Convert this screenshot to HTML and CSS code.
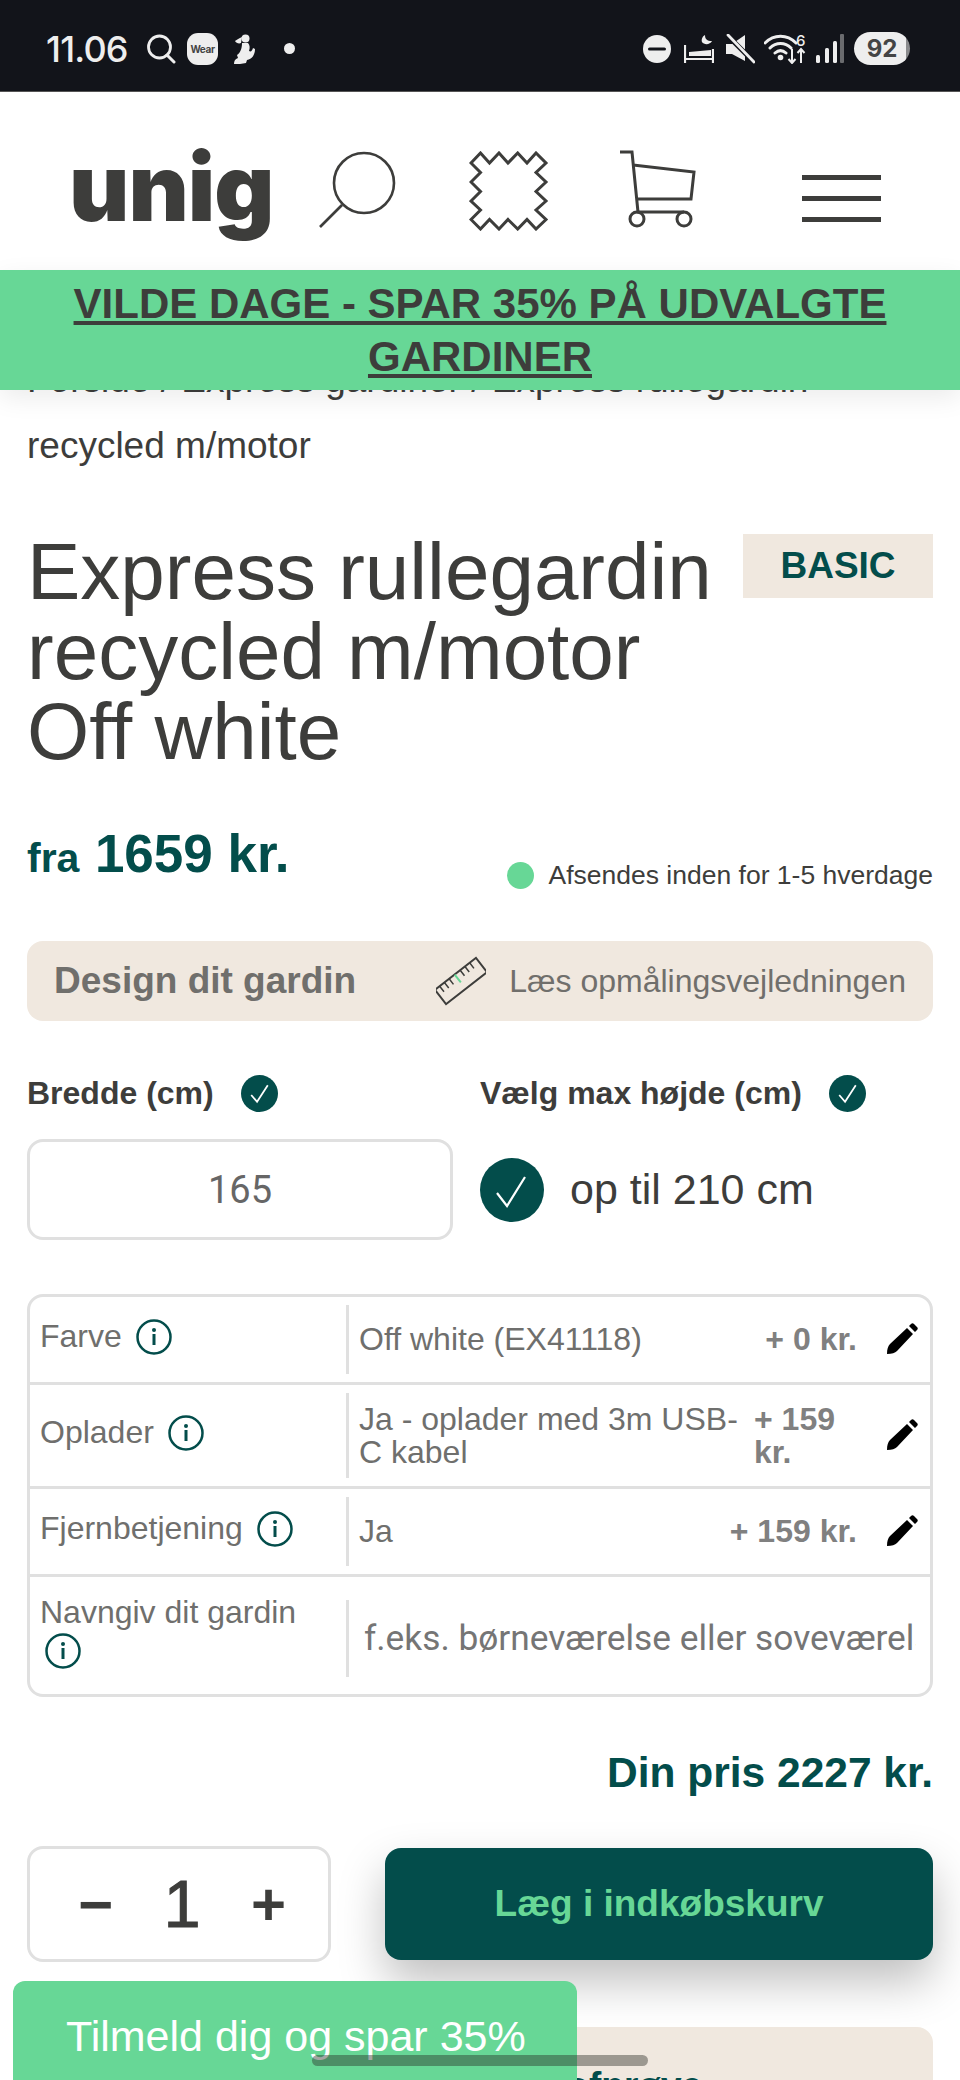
FILE: index.html
```html
<!DOCTYPE html>
<html lang="da">
<head>
<meta charset="utf-8">
<title>Express rullegardin recycled m/motor</title>
<link rel="stylesheet" href="styles.css">
</head>
<body>
<div class="page">
  <div class="status">
    <div class="status-left">
      <span class="clock">11.06</span>
      <svg class="st-search" viewBox="0 0 30 30"><circle cx="13.500" cy="13" r="11" fill="none" stroke="#eee" stroke-width="2.800"/><path d="M21 21l7 7" stroke="#eee" stroke-width="3" stroke-linecap="round"/></svg>
      <span class="wear">Wear</span>
      <svg class="st-fig" viewBox="0 0 24 30"><circle cx="13.500" cy="4.500" r="4" fill="#eee"/><path d="M10 3C7 4 5 6 3 7c1 2 4 3 6 2z" fill="#eee"/><path d="M10 9h6c2 2 2 5 1 8 2 1 3 0 4-3l2 1c0 6-3 10-8 11l-1 3c-4 1-8 1-12 1 0-3 1-5 4-6l-1-3c3-2 5-6 5-12z" fill="#eee"/></svg>
      <span class="st-dot"></span>
    </div>
    <div class="status-right">
      <svg class="st-dnd" viewBox="0 0 28 28"><circle cx="14" cy="14" r="14" fill="#eee"/><rect x="5" y="12.400" width="18" height="3.200" rx="1.600" fill="#12141a"/></svg>
      <svg class="st-bed" viewBox="0 0 30 28"><path d="M1 10v18M1 24h28v4M29 14v10" stroke="#eee" stroke-width="2.200" fill="none"/><path d="M5 21h22v-6L5 17z" fill="#eee"/><path d="M21 0c0 4 2 6 7 6-2 4-8 4-10 1-1-3 1-6 3-7z" fill="#eee"/></svg>
      <svg class="st-mute" viewBox="0 0 30 30"><path d="M1 10h6l13-9v26L7 20H1z" fill="#eee"/><path d="M3 2l26 26" stroke="#12141a" stroke-width="5"/><path d="M3 1l26 27" stroke="#eee" stroke-width="2.800" stroke-linecap="round"/></svg>
      <svg class="st-wifi" viewBox="0 0 42 30"><path d="M1 9c9-9 22-9 31 0M6 14c6-6 15-6 21 0M11 19c3.400-3 7.600-3 11 0" fill="none" stroke="#eee" stroke-width="3" stroke-linecap="round"/><circle cx="16.500" cy="23.500" r="2.800" fill="#eee"/><path d="M28 15v14m-3.500-4l3.500 4 3.500-4M37 29V15m-3.500 4l3.500-4 3.500 4" fill="none" stroke="#eee" stroke-width="2"/><text x="32" y="12" class="st-six">6</text></svg>
      <svg class="st-signal" viewBox="0 0 28 30"><g fill="#eee"><rect x="0" y="21" width="4" height="8" rx="1.500"/><rect x="9" y="14" width="4" height="15" rx="1.500"/><rect x="17" y="7" width="4" height="22" rx="1.500"/></g><rect x="24" y="0" width="4" height="29" rx="1" fill="#6a6b6e"/></svg>
      <span class="battery">92</span>
    </div>
  </div>

  <header class="head">
    <span class="logo">unig</span>
    <svg class="ic-search" viewBox="0 0 80 80"><circle cx="46" cy="32" r="30" fill="none" stroke="#3d3d3b" stroke-width="2.600"/><path d="M24 54L2 76" stroke="#3d3d3b" stroke-width="2.600"/></svg>
    <svg class="ic-swatch" viewBox="-2 -2 80 80"><path d="M0 10L9.500 0 18.500 10 28 0 37 10 46.700 0 56 10 65 0 75 10 65 19.500 75 29 65 38.500 75 48 65 57 75 66.500 65 76 56 66.500 46.700 76 37 66.500 28 76 18.500 66.500 9.500 76 0 66.500 9.500 57 0 48 9.500 38.500 0 29 9.500 19.500z" fill="none" stroke="#3d3d3b" stroke-width="3"/></svg>
    <svg class="ic-cart" viewBox="0 0 80 82"><path d="M1 2h12l6 60h46M14 15l61 7-3 27H17" fill="none" stroke="#3d3d3b" stroke-width="3"/><circle cx="18" cy="69" r="7" fill="none" stroke="#3d3d3b" stroke-width="3"/><circle cx="65" cy="69" r="7" fill="none" stroke="#3d3d3b" stroke-width="3"/></svg>
    <div class="burger"><span></span><span></span><span></span></div>
  </header>

  <div class="banner"><a href="#">VILDE DAGE - SPAR 35% PÅ UDVALGTE GARDINER</a></div>

  <main class="main">
    <p class="crumbs">Forside / Express gardiner / Express rullegardin recycled m/motor</p>

    <div class="title-row">
      <h1 class="title">Express rullegardin recycled m/motor<br>Off white</h1>
      <span class="tag">BASIC</span>
    </div>

    <div class="price-row">
      <div class="price"><span class="fra">fra</span> <span class="amount">1659 kr.</span></div>
      <div class="ship"><span class="ship-dot"></span>Afsendes inden for 1-5 hverdage</div>
    </div>

    <div class="design">
      <span class="design-title">Design dit gardin</span>
      <span class="guide">
        <svg class="ruler" viewBox="0 0 50 50"><g transform="rotate(-38 25 25)"><rect x="-1" y="16" width="52" height="18" fill="none" stroke="#3d3d3b" stroke-width="2"/><path d="M5 16v7M11 16v7M17 16v7M31 16v7M37 16v7M43 16v7" stroke="#3d3d3b" stroke-width="1.500"/><path d="M24 16v10" stroke="#67d796" stroke-width="2"/></g></svg>
        Læs opmålingsvejledningen
      </span>
    </div>

    <div class="dims">
      <div class="dim">
        <div class="dim-label">Bredde (cm) <svg class="check-s" viewBox="0 0 38 38"><circle cx="19" cy="19" r="19" fill="#034d4b"/><path d="M10.500 20.500l6 7 11-17" fill="none" stroke="#fff" stroke-width="1.800"/></svg></div>
        <div class="dim-input">165</div>
      </div>
      <div class="dim">
        <div class="dim-label">Vælg max højde (cm) <svg class="check-s" viewBox="0 0 38 38"><circle cx="19" cy="19" r="19" fill="#034d4b"/><path d="M10.500 20.500l6 7 11-17" fill="none" stroke="#fff" stroke-width="1.800"/></svg></div>
        <div class="dim-choice"><svg class="check-l" viewBox="0 0 64 64"><circle cx="32" cy="32" r="32" fill="#034d4b"/><path d="M17 35l10 13 18-29" fill="none" stroke="#fff" stroke-width="2.200"/></svg>op til 210 cm</div>
      </div>
    </div>

    <div class="opts">
      <div class="opt opt-a">
        <div class="opt-name">Farve <svg class="info" viewBox="0 0 36 36"><circle cx="18" cy="18" r="16.500" fill="none" stroke="#034d4b" stroke-width="2.500"/><circle cx="18" cy="11" r="2" fill="#034d4b"/><rect x="16.500" y="15" width="3" height="11" fill="#034d4b"/></svg></div>
        <div class="opt-val">Off white (EX41118)</div>
        <div class="opt-price">+ 0 kr.</div>
        <svg class="pen" viewBox="0 0 32 32"><path d="M1 31c0-5 1-8 3-10L21 5l6 6L11 28c-2 2-5 3-10 3zM23 3l2-2c1-1 2-1 3 0l3 3c1 1 1 2 0 3l-2 2z" fill="#000"/></svg>
      </div>
      <div class="opt opt-b">
        <div class="opt-name">Oplader <svg class="info" viewBox="0 0 36 36"><circle cx="18" cy="18" r="16.500" fill="none" stroke="#034d4b" stroke-width="2.500"/><circle cx="18" cy="11" r="2" fill="#034d4b"/><rect x="16.500" y="15" width="3" height="11" fill="#034d4b"/></svg></div>
        <div class="opt-val">Ja - oplader med 3m USB-C kabel</div>
        <div class="opt-price opt-price-wrap">+ 159 kr.</div>
        <svg class="pen" viewBox="0 0 32 32"><path d="M1 31c0-5 1-8 3-10L21 5l6 6L11 28c-2 2-5 3-10 3zM23 3l2-2c1-1 2-1 3 0l3 3c1 1 1 2 0 3l-2 2z" fill="#000"/></svg>
      </div>
      <div class="opt opt-c">
        <div class="opt-name">Fjernbetjening <svg class="info" viewBox="0 0 36 36"><circle cx="18" cy="18" r="16.500" fill="none" stroke="#034d4b" stroke-width="2.500"/><circle cx="18" cy="11" r="2" fill="#034d4b"/><rect x="16.500" y="15" width="3" height="11" fill="#034d4b"/></svg></div>
        <div class="opt-val">Ja</div>
        <div class="opt-price">+ 159 kr.</div>
        <svg class="pen" viewBox="0 0 32 32"><path d="M1 31c0-5 1-8 3-10L21 5l6 6L11 28c-2 2-5 3-10 3zM23 3l2-2c1-1 2-1 3 0l3 3c1 1 1 2 0 3l-2 2z" fill="#000"/></svg>
      </div>
      <div class="opt opt-d">
        <div class="opt-name">Navngiv dit gardin <svg class="info info-own" viewBox="0 0 36 36"><circle cx="18" cy="18" r="16.500" fill="none" stroke="#034d4b" stroke-width="2.500"/><circle cx="18" cy="11" r="2" fill="#034d4b"/><rect x="16.500" y="15" width="3" height="11" fill="#034d4b"/></svg></div>
        <div class="opt-field"><span>f.eks. børneværelse eller soveværelse</span></div>
      </div>
    </div>

    <div class="total">Din pris 2227 kr.</div>

    <div class="buy">
      <div class="qty"><span class="qty-minus">−</span><span class="qty-n">1</span><span class="qty-plus">+</span></div>
      <button class="add">Læg i indkøbskurv</button>
    </div>

    <div class="sample">Bestil en gratis stofprøve</div>
  </main>

  <div class="signup">Tilmeld dig og spar 35%</div>
  <div class="home-pill"></div>
</div>
</body>
</html>
```
FILE: styles.css
```css
* { box-sizing: border-box; }
html, body { margin: 0; padding: 0; height: 2080px; overflow: hidden; background: #fff; }
body { font-family: "Liberation Sans", Arial, sans-serif; color: #3d3d3b; }
.page { position: relative; width: 960px; height: 2080px; overflow: hidden; }

/* status bar */
.status { height: 92px; background: #12141a; border-bottom: 1px solid #555; display: flex; justify-content: space-between; align-items: center; padding: 6px 50px 0 46px; }
.status-left, .status-right { display: flex; align-items: center; }
.clock { font-family: Inter, sans-serif; font-weight: 500; font-size: 36px; letter-spacing: -0.8px; color: #eee; width: 100px; }
.st-search { width: 30px; height: 30px; margin-right: 11px; }
.wear { width: 31px; height: 32px; border-radius: 11px; background: #eee; color: #444; font-family: Inter, sans-serif; font-weight: 700; font-size: 10px; display: flex; align-items: center; justify-content: center; letter-spacing: -0.4px; }
.st-fig { width: 24px; height: 30px; margin-left: 14px; }
.st-dot { width: 11px; height: 11px; border-radius: 50%; background: #eee; margin-left: 28px; }
.st-dnd { width: 28px; height: 28px; }
.st-bed { width: 30px; height: 28px; margin-left: 13px; }
.st-mute { width: 30px; height: 30px; margin-left: 11px; }
.st-wifi { width: 42px; height: 30px; margin-left: 9px; }
.st-six { font-family: Inter, sans-serif; font-weight: 500; font-size: 15px; fill: #eee; }
.st-signal { width: 28px; height: 30px; margin-left: 10px; }
.battery { width: 56px; height: 33px; margin-left: 10px; border-radius: 17px; background: linear-gradient(90deg, #eee 92%, #8a8b8d 92%); color: #444; font-family: Inter, sans-serif; font-weight: 700; font-size: 24px; display: flex; align-items: center; justify-content: center; }

/* header */
.head { height: 178px; display: flex; align-items: center; padding: 20px 0 0 69px; position: relative; }
.logo { font-family: Inter, sans-serif; font-weight: 900; font-size: 93px; letter-spacing: -1px; color: #3d3d3b; line-height: 1; width: 249px; margin-top: -8px; }
.ic-search { width: 80px; height: 80px; }
.ic-swatch { width: 80px; height: 80px; margin-left: 71px; }
.ic-cart { width: 80px; height: 82px; margin-left: 70px; }
.burger { width: 79px; margin-left: 103px; display: flex; flex-direction: column; gap: 16px; margin-top: 14px; }
.burger span { display: block; height: 5px; background: #3d3d3b; }

/* banner */
.banner { position: relative; z-index: 2; height: 120px; background: #67d796; padding: 7px 40px 0; text-align: center; font-weight: 700; font-size: 42px; line-height: 53px; box-shadow: 0 8px 24px rgba(0,0,0,.08); }
.banner a { color: #3d3d3b; text-decoration: underline; }

/* main */
.main { padding: 0 27px; }
.crumbs { margin: -43px 0 0; font-size: 37px; line-height: 66px; color: #3d3d3b; }
.title-row { display: flex; justify-content: space-between; align-items: flex-start; margin-top: 55px; height: 245px; }
.title { margin: -2px 0 0; width: 710px; font-weight: 400; font-size: 80px; line-height: 80px; color: #3d3d3b; }
.tag { width: 190px; height: 64px; background: #f0e8df; color: #034d4b; font-weight: 700; font-size: 37px; display: flex; align-items: center; justify-content: center; }

.price-row { display: flex; justify-content: space-between; align-items: flex-end; margin-top: 54px; height: 70px; }
.price { color: #034d4b; font-weight: 700; line-height: 60px; margin-bottom: 6px; }
.fra { font-size: 41px; }
.amount { font-size: 53px; margin-left: 11px; }
.ship { display: flex; align-items: center; font-size: 26.500px; color: #3d3d3b; margin-bottom: 12px; }
.ship-dot { width: 27px; height: 27px; border-radius: 50%; background: #67d796; margin-right: 14px; }

.design { height: 80px; margin-top: 38px; background: #f0e8df; border-radius: 16px; display: flex; align-items: center; justify-content: space-between; padding: 0 27px; color: #706f6c; }
.design-title { font-weight: 700; font-size: 37px; }
.guide { display: flex; align-items: center; font-size: 32px; }
.ruler { width: 50px; height: 50px; margin-right: 23px; }

.dims { display: grid; grid-template-columns: 426px 1fr; column-gap: 27px; margin-top: 52px; }
.dim-label { font-weight: 700; font-size: 32px; height: 40px; display: flex; align-items: center; gap: 27px; }
.check-s { width: 37px; height: 37px; }
.dim-input { margin-top: 26px; height: 101px; border: 3px solid #e0e0e0; border-radius: 16px; font-family: Roboto, sans-serif; font-size: 38px; color: #666; display: flex; align-items: center; justify-content: center; }
.dim-choice { margin-top: 26px; height: 101px; display: flex; align-items: center; font-size: 43px; color: #3d3d3b; }
.check-l { width: 64px; height: 64px; margin-right: 26px; }

.opts { margin-top: 54px; border: 3px solid #e0e0e0; border-radius: 16px; color: #6f6f6d; font-size: 32px; line-height: 33px; }
.opt { display: flex; align-items: center; border-bottom: 3px solid #e0e0e0; padding-left: 10px; }
.opt:last-child { border-bottom: 0; }
.opt-a { height: 88px; }
.opt-b { height: 104px; }
.opt-c { height: 88px; }
.opt-d { height: 117px; }
.opt-name { width: 306px; flex: none; display: flex; flex-wrap: wrap; align-items: center; column-gap: 14px; margin-top: -6px; }
.opt-val { height: calc(100% - 16px); border-left: 3px solid #e0e0e0; padding-left: 10px; display: flex; align-items: center; flex: 1; min-width: 0; }
.opt-price { font-weight: 700; color: #808080; white-space: nowrap; margin-right: 29px; }
.opt-price-wrap { white-space: normal; width: 115px; margin-left: 0; margin-right: 17px; }
.pen { width: 32px; height: 32px; flex: none; margin-right: 12px; margin-top: -2px; }
.info { width: 36px; height: 36px; flex: none; }
.info-own { margin-left: 5px; margin-top: 4px; }
.opt-field { flex: 1; min-width: 0; height: 77px; border-left: 3px solid #e0e0e0; display: flex; align-items: center; padding: 0 14px 0 15px; overflow: hidden; white-space: nowrap; font-family: Roboto, sans-serif; font-size: 35.300px; color: #757575; margin-top: 5px; }
.opt-field span { overflow: hidden; }

.total { margin-top: 53px; text-align: right; color: #034d4b; font-weight: 700; font-size: 42.500px; line-height: 46px; }

.buy { display: flex; align-items: center; justify-content: space-between; margin-top: 50px; }
.qty { width: 304px; height: 116px; border: 3px solid #e0e0e0; border-radius: 16px; display: flex; align-items: center; justify-content: space-between; padding: 0 42px 0 48px; font-size: 60px; color: #3d3d3b; font-weight: 400; }
.qty-minus, .qty-plus { font-weight: 700; }
.qty-n { font-size: 66px; -webkit-text-stroke: 1.200px #3d3d3b; }
.add { width: 548px; height: 112px; border: 0; border-radius: 16px; background: #034d4b; color: #67d796; font-family: "Liberation Sans", sans-serif; font-weight: 700; font-size: 37px; box-shadow: 0 22px 46px rgba(0,0,0,.25); }

.sample { margin-top: 65px; height: 100px; border-radius: 16px; background: #f0e8df; color: #034d4b; font-weight: 700; font-size: 37px; text-align: center; padding-top: 38px; }

/* overlays */
.signup { position: absolute; left: 13px; bottom: 0; width: 564px; height: 99px; padding: 32px 0 0 53px; background: #67d796; border-radius: 12px 12px 0 0; color: #fff; font-size: 43px; line-height: 46px; z-index: 3; }
.home-pill { position: absolute; left: 312px; top: 2055px; width: 336px; height: 11px; border-radius: 6px; background: rgba(40,40,35,.42); z-index: 4; }
```
